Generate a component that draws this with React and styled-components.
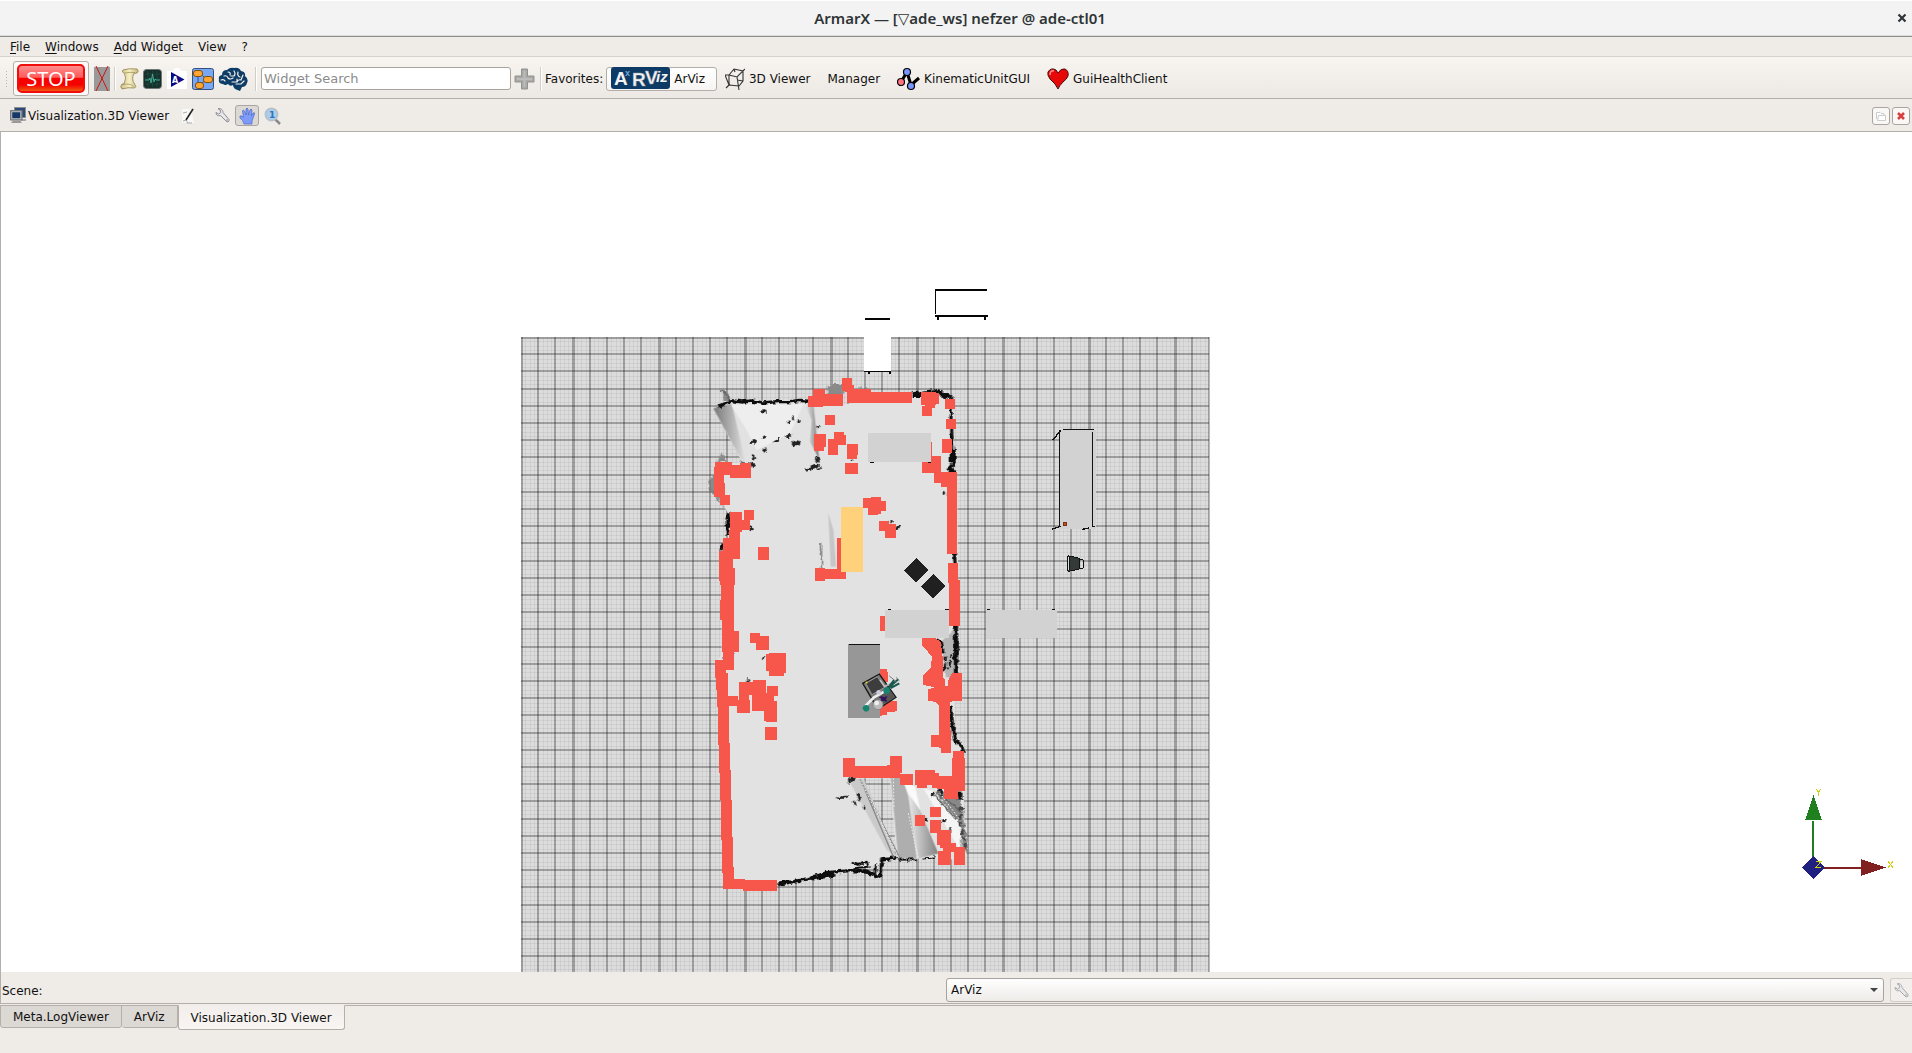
import React from "react";
import styled, { createGlobalStyle, css } from "styled-components";

const Global = createGlobalStyle`
  * { box-sizing: border-box; }
  body { margin: 0; background: #efebe7; color: #111; font: 12px/16px "DejaVu Sans", "Noto Sans", sans-serif; }
  button, input, select { font: inherit; color: inherit; margin: 0; }
  svg { display: block; flex: none; }
`;

const Window = styled.div`
  display: flex;
  flex-direction: column;
  height: 100vh;
  min-height: 480px;
  overflow: hidden;
`;

const TitleBar = styled.header`
  display: grid;
  grid-template-columns: 32px 1fr 24px;
  align-items: center;
  height: 37px;
  background: #f3f3f3;
  border-top: 1px solid #fff;
  border-bottom: 1px solid #8d8f8a;
  box-shadow: inset 0 -1px #dcdcda;
`;

const Title = styled.h1`
  grid-column: 2;
  margin: 0;
  padding-bottom: 2px;
  text-align: center;
  font: 600 15px/20px "Noto Sans", "DejaVu Sans", sans-serif;
  color: #2e3436;
`;

const PlainButton = styled.button`
  display: flex;
  align-items: center;
  justify-content: center;
  padding: 0;
  border: 0;
  background: none;
`;

const WindowClose = styled(PlainButton)`
  padding: 0 0 1px 4px;
`;

const MenuBar = styled.nav`
  display: flex;
  align-items: center;
  gap: 15px;
  height: 20px;
  padding: 0 10px;
  border-bottom: 1px solid #d5d1cb;
`;

const MenuItem = styled(PlainButton)`
  &::first-letter { text-decoration: ${(p) => (p.$plain ? "none" : "underline")}; text-underline-offset: 2px; }
  display: block;
`;

const ToolBar = styled.div`
  display: flex;
  align-items: center;
  height: 42px;
  padding: 2px 5px 0;
  background: linear-gradient(#f8f5f1, #ece8e3);
  border-bottom: 1px solid #b4afa9;
`;

const Handle = styled.div`
  width: 4px;
  height: 18px;
  margin-right: 4px;
  background: radial-gradient(circle, #bbb6b0 1px, transparent 1px) 0 0 / 3px 3px;
`;

const StopFrame = styled(PlainButton)`
  width: 76px;
  height: 35px;
  border: 1px solid #b3aea8;
  border-radius: 3px;
  background: #fbfaf9;
`;

const StopFace = styled.span`
  width: 68px;
  height: 29px;
  border: 2px solid #f20d0d;
  border-radius: 5px;
  background: linear-gradient(#ff8d8d, #ff5a5a 45%, #f60000 50%, #f60000 75%, #ee5a10);
  color: #fff;
  font: 20px/25px "Noto Sans", sans-serif;
`;

const Tools = styled.div`
  display: flex;
  align-items: center;
  gap: 4px;
  padding: 0 7px 0 5px;
`;

const Separator = styled.div`
  width: 2px;
  height: 24px;
  border-left: 1px solid #d2cdc7;
  border-right: 1px solid #fff;
`;

const Search = styled.input`
  width: 250px;
  height: 23px;
  margin: 0 3px 0 4px;
  padding: 0 2px;
  border: 1px solid #a8a39d;
  border-radius: 3px;
  background: #fff;
  outline: 0;
  font-size: 13px;
  &::placeholder { color: #8b8b8b; opacity: 1; }
`;

const Favorites = styled.div`
  display: flex;
  align-items: center;
  gap: 3px;
  margin-left: 5px;
`;

const FavoritesLabel = styled.span`
  white-space: nowrap;
`;

const Favorite = styled(PlainButton)`
  gap: 4px;
  height: 24px;
  padding: 0 8px 0 4px;
  border: 1px solid transparent;
  border-radius: 3px;
  white-space: nowrap;
  ${(p) => p.$raised && css`
    padding-right: 11px;
    border-color: #b3aea8;
    background: linear-gradient(#fff, #f7f5f3);
  `}
`;

const DockHeader = styled.div`
  display: flex;
  align-items: center;
  height: 33px;
  padding: 1px 2px 0 10px;
  border-bottom: 1px solid #b4afa9;
`;

const DockTitle = styled.h2`
  margin: 0 12px 0 2px;
  font: inherit;
`;

const DockTools = styled.div`
  display: flex;
  align-items: center;
  gap: 5px;
  margin-left: 20px;
`;

const ToggleButton = styled(PlainButton)`
  width: 24px;
  height: 21px;
  border: 1px solid #aaa5a0;
  border-radius: 3px;
  background: #dcd8d4;
`;

const DockActions = styled.div`
  display: flex;
  gap: 2px;
  margin-left: auto;
`;

const SmallButton = styled(PlainButton)`
  width: 18px;
  height: 18px;
  border: 1px solid #aaa5a0;
  border-radius: 3px;
  background: #f9f8f7;
`;

const Viewer = styled.main`
  position: relative;
  flex: 1;
  min-height: 0;
  background: #fff;
  border-left: 1px solid #b4afa9;
`;

const Scene = styled.svg`
  width: 100%;
  height: 100%;
`;

const AxisGizmo = styled.svg`
  position: absolute;
  right: 17px;
  bottom: 85px;
`;

const SceneBar = styled.div`
  display: flex;
  align-items: center;
  gap: 6px;
  height: 32px;
  padding: 0 0 1px 1px;
  border-left: 1px solid #b4afa9;
  border-bottom: 1px solid #b4afa9;
`;

const SceneLabel = styled.label`
  flex: 1;
  padding-top: 8px;
`;

const SelectBox = styled.div`
  position: relative;
  display: flex;
  flex: 1;
  align-self: flex-end;
  svg { position: absolute; right: 6px; top: 10px; pointer-events: none; }
`;

const SceneSelect = styled.select`
  flex: 1;
  appearance: none;
  height: 24px;
  padding: 0 4px;
  border: 1px solid #a8a39d;
  border-radius: 3px;
  background: linear-gradient(#fff, #eeebe8);
`;

const SceneSettings = styled(PlainButton)`
  width: 22px;
  height: 24px;
  align-self: flex-end;
  border: 1px solid #c5c0bb;
  border-right: 0;
  border-radius: 3px 0 0 3px;
  background: #f4f2ef;
  opacity: 0.7;
`;

const TabBar = styled.div`
  display: flex;
  align-items: flex-start;
  height: 48px;
  margin-top: 1px;
  box-shadow: inset 0 1px #b4afa9;
`;

const Tab = styled(PlainButton)`
  height: 23px;
  padding: 1px 12px 0;
  border: 1px solid #b4afa9;
  border-left-width: ${(p) => (p.$first ? "1px" : "0")};
  border-radius: 0 0 3px 3px;
  background: #dcd8d4;
  ${(p) => p.$active && css`
    height: 25px;
    border-top-color: #f1eeeb;
    border-left-width: 1px;
    background: linear-gradient(#f1eeeb, #f8f5f2);
  `}
`;

/* ---------- toolbar icons ---------- */

const Wrench = ({ size = 15 }) => (
  <svg width={size} height={size} viewBox="0 0 15 15">
    <path d="M1 4.500 3.600 6 5.600 4.600 5.200 2 3 .8C5.500 0 8 1.600 8 4.500L14 11.500Q14.600 14 12 14L5.600 7.600C3 8.500 .8 7 1 4.500Z" fill="#e6e6ea" stroke="#8d8d94" />
    <circle cx="12" cy="12" r=".8" fill="#888" />
  </svg>
);

const DisconnectIcon = () => (
  <svg width="16" height="25" viewBox="0 0 16 25">
    <path d="M0 1h16v24H0z" fill="#999" />
    <path d="M2 0 14 25M14 0 2 25" stroke="#d01212" fill="none" />
  </svg>
);

const ScrollIcon = () => (
  <svg width="19" height="22" viewBox="0 0 19 22">
    <defs><linearGradient id="paper"><stop stopColor="#cdbf83" /><stop offset=".5" stopColor="#f6efc6" /><stop offset="1" stopColor="#cbbb7c" /></linearGradient></defs>
    <path d="M3 2Q9 0 17 1Q19.500 3 17 5L14 5.500Q11 11 14.500 16Q17 19 14.500 20Q8 19 2 21Q-.5 19 2 16H4Q7 10 4.500 5.500Q1 4 3 2Z" fill="url(#paper)" stroke="#8d7f4a" strokeWidth=".8" />
    <path d="M4.500 5Q10 4 15 4.500M3 16.500Q12 15 13.500 19" fill="none" stroke="#9b8c52" strokeWidth=".7" />
  </svg>
);

const MonitorIcon = () => (
  <svg width="19" height="20" viewBox="0 0 19 20">
    <rect x=".5" y=".5" width="18" height="19" rx="3" fill="#16302c" stroke="#6e7775" />
    <path d="M2 5H17M2 10H17M2 15H17M5 2V18M9.500 2V18M14 2V18" stroke="#24504a" strokeWidth=".6" />
    <path d="M2 11H6L7 9 8 14 9.500 5 11 13 12 10 13 11H17" fill="none" stroke="#43b59b" strokeWidth=".9" />
  </svg>
);

const PlayIcon = () => (
  <svg width="22" height="22" viewBox="-1 0 22 22">
    <path d="M0 3H6Q7 0 10 0T14 3H20V21H0Z" fill="#fff" />
    <path d="M4 4 17.500 11.500 4 19Z" fill="#0b0b86" />
    <text x="5" y="15" fontSize="8" fontWeight="700" fill="#fff">A</text>
  </svg>
);

const FlowIcon = () => (
  <svg width="22" height="22" viewBox="0 0 22 22">
    <rect x=".5" y=".5" width="21" height="21" rx="2" fill="#78a8f5" stroke="#35507c" />
    <path d="M6 6V17M9 6 14 11M7 17 14 12" stroke="#35507c" fill="none" />
    <g fill="#ffa530" stroke="#82500b">
      <rect x="1.500" y="2.500" width="9" height="6" rx="2.500" />
      <rect x="11.500" y="8.500" width="9" height="6" rx="2.500" />
      <rect x="3.500" y="14.500" width="8" height="6" rx="2.500" />
    </g>
  </svg>
);

const BrainIcon = () => (
  <svg width="30" height="24" viewBox="0 0 30 24">
    <path d="M5 17Q0 17 1 12Q0 9 4 8Q4 3 9 3Q12 0 16 1Q21 0 23 4Q28 5 27 9Q31 12 29 16Q28 20 24 20L22 24 17 22Q15 20 15 18Q12 20 10 17Q7 19 5 17Z" fill="#0d3c66" />
    <path d="M3 13Q6 12 7 14M6 9Q9 8 10 11Q12 13 15 11M10 5Q13 5 12 8M13 9 16 9Q18 7 16 4M20 5Q19 9 22 10M25 8 23 13Q20 12 19 15L14 15M26 14 23 17 18 17M19 15V12" fill="none" stroke="#f3f1ed" strokeWidth="1.200" strokeLinecap="round" />
  </svg>
);

const PlusIcon = () => (
  <svg width="21" height="22" viewBox="0 0 21 22">
    <path d="M7.500 1H13.500V8H20V14H13.500V21H7.500V14H1V8H7.500Z" fill="#a9a9a7" stroke="#929290" />
    <path d="M10.500 3V19M3 11H18" stroke="#bcbcba" strokeWidth="2" />
  </svg>
);

const LogoSvg = styled.svg`
  overflow: visible;
`;

const ArVizLogo = () => (
  <LogoSvg width="59" height="23" viewBox="0 0 59 23">
    <rect width="59" height="22" rx="3" fill="#0d3b66" />
    <g fill="#f2f2f2" fontFamily="Liberation Sans, sans-serif" fontWeight="700">
      <text x="3" y="18" fontSize="19">A</text>
      <text x="14" y="9" fontSize="9" fill="#6fa5d6">x</text>
      <text x="21" y="19" fontSize="19" stroke="#999" strokeWidth=".4">R</text>
      <text x="34" y="17" fontSize="19" stroke="#999" strokeWidth=".4">V</text>
      <text x="45" y="15" fontSize="15" fontStyle="italic">iz</text>
    </g>
  </LogoSvg>
);

const CubeIcon = () => (
  <svg width="20" height="24" viewBox="0 0 20 24" fill="none" stroke="#333" strokeWidth="1.100">
    <path d="M0 8H4L9 2 18 4V14L14 19 4 18ZM4 8 12 10 20 2M12 10 14 23M4 8V18M9 2 10 5M1 21 5 17M12 13 18 14" />
  </svg>
);

const JointsIcon = () => (
  <svg width="23" height="24" viewBox="0 0 23 24">
    <path d="M4 15 10 5 14 18 22 11" fill="none" stroke="#000" strokeWidth="3" />
    <g stroke="#000" strokeWidth="1.200">
      <circle cx="4" cy="15" r="3.500" fill="#ff7382" /><circle cx="10" cy="5" r="3.500" fill="#7795ff" /><circle cx="14" cy="19" r="3.500" fill="#7795ff" />
    </g>
  </svg>
);

const HeartIcon = () => (
  <svg width="22" height="22" viewBox="0 0 22 22">
    <path d="M11 21Q9 16 3 11Q0 7 1 4Q4-1 9 2L11 5Q14 0 18 1Q22 3 21 8Q20 11 16 14Q12 18 11 21Z" fill="#e70808" stroke="#431010" />
    <path d="M3 7Q3 2 7 3" fill="none" stroke="#ff8c8c" strokeWidth="1.500" />
  </svg>
);

const ScreensIcon = () => (
  <svg width="16" height="17" viewBox="0 0 16 17">
    <rect x="4.500" y=".5" width="11" height="10" fill="#294a7a" stroke="#8f8f8f" />
    <path d="M11 12H16V14H11Z" fill="#aaa" />
    <rect x=".8" y="3.800" width="11" height="9" fill="#173765" stroke="#777" strokeWidth="1.500" />
    <rect x="1.800" y="4.800" width="9" height="7" fill="none" stroke="#e4e4e4" strokeWidth=".8" />
    <path d="M3 13.500H10L12 16H1Z" fill="#999" />
  </svg>
);

const NotePenIcon = () => (
  <svg width="14" height="16" viewBox="0 0 14 16">
    <path d="M1 1H10L13 15H1Z" fill="#f8f8f7" />
    <path d="M2 13Q7 11 6 15H11M2 5 6 4" stroke="#aaa" fill="none" />
    <path d="M12 1 5 12" stroke="#222" strokeWidth="1.600" />
  </svg>
);

const HandIcon = () => (
  <svg width="16" height="18" viewBox="0 0 16 18">
    <path d="M5 17Q4 13 1 11Q0 8 3 9L4.500 10.500 3.500 4Q4 2 5.500 4L7 8 7 2Q8 0 9 2L9.500 8 11 3Q12 1 13 3L12.300 9 14 6Q16 5 15.500 7L13 14V17Z" fill="#7f9bf9" stroke="#4d67c7" strokeWidth=".7" />
  </svg>
);

const ZoomIcon = () => (
  <svg width="17" height="18" viewBox="0 0 17 18">
    <path d="M11 12 16 17" stroke="#8a8a8a" strokeWidth="2.500" />
    <circle cx="7.500" cy="7.500" r="6.200" fill="#a9cdec" stroke="#b7bfc7" strokeWidth="1.500" />
    <text x="5" y="11" fontSize="9" fontWeight="700" fill="#3273b5">1</text>
  </svg>
);

/* ---------- 3D scene ---------- */

const CELL = 17.2;
const GRID = { x: 521, y: 337, w: 688, h: 636 };

const gridLines = (length, wideOffset) =>
  Array.from({ length: Math.floor(length / (CELL / 4)) + 1 }, (_, i) => {
    const major = i % 4 === 0;
    const wide = major && (i / 4) % 5 === wideOffset;
    return { at: Math.round((i * CELL) / 4) - (major && i > 0 ? 1 : 0), size: wide ? 3 : major ? 2 : 1, major };
  });

const FloorGrid = () => (
  <g shapeRendering="crispEdges">
    <rect x={GRID.x} y={GRID.y} width={GRID.w} height={GRID.h} fill="#dcdcdc" />
    {gridLines(GRID.w, 3).map((l) => (
      <rect key={"v" + l.at} x={GRID.x + l.at} y={GRID.y} width={l.size} height={GRID.h} fillOpacity={l.major ? 0.28 : 0.05} />
    ))}
    {gridLines(GRID.h, 9).map((l) => (
      <rect key={"h" + l.at} x={GRID.x} y={GRID.y + l.at} width={GRID.w} height={l.size} fillOpacity={l.major ? 0.28 : 0.05} />
    ))}
  </g>
);

const northScans = [
  [368,57,37,30],[355,78,45,33],[400,72,60,36],[456,24,30,40],[466,45,26,20],[472,65,70,35],[492,57,50,20],[540,66,126,32],
  [694,67,45,38],[700,70,47,32],[696,108,30,30],[706,95,28,20],[765,87,30,30],[768,147,30,30],[756,207,30,42],[405,135,30,30],
  [372,192,35,38],[372,210,30,34],[432,186,30,30],[440,195,28,30],[414,207,30,48],[471,222,32,32],[471,240,30,26],[465,279,39,32],
  [720,216,6,60],[696,276,30,32],[715,258,38,52],[732,305,68,34],[752,310,45,42],[771,330,30,222],[75,276,50,40],[120,285,62,38],
  [150,279,33,40],[72,290,30,92],[78,340,28,42],[90,375,29,30],[519,384,40,30],[543,381,30,50],[534,395,54,20],[534,400,30,35],
  [570,393,18,30],[567,453,31,30],[585,462,33,42],[162,420,30,30],[120,426,36,60],[150,450,30,30],[117,480,32,87],[99,504,36,60],
  [88,543,42,90],[90,594,45,50],[93,640,39,55],[90,690,42,60],[204,531,33,39],[441,503,14,100],[375,594,30,39],[400,597,68,31],
  [774,579,30,60],[777,630,32,120],[570,738,16,44],
];

const southScans = [
  [90,0,42,40],[95,30,38,110],[97,93,50,62],[100,140,33,70],[75,180,33,55],[78,220,36,50],[82,260,32,60],[84,315,34,120],
  [87,430,34,90],[90,510,34,90],[92,600,35,120],[96,710,33,110],[99,800,32,66],[105,836,60,32],[160,840,101,32],[112,288,32,30],
  [180,99,30,30],[198,108,39,42],[228,162,32,50],[237,159,50,60],[237,190,45,37],[148,246,40,40],[147,246,30,70],[141,300,39,38],
  [190,240,38,60],[186,280,45,52],[231,258,33,30],[222,285,30,78],[228,303,32,62],[225,381,36,38],[777,0,32,77],
  [459,474,35,57],[490,498,120,35],[600,468,35,50],[590,495,40,38],[630,522,39,32],[675,510,60,45],[680,515,30,48],[725,520,22,45],
  [740,528,80,38],[762,540,42,57],[790,453,33,70],[786,475,38,98],[720,622,33,30],[675,645,30,33],[720,660,33,40],[742,690,40,44],
  [750,700,32,45],[760,730,38,26],[744,752,40,44],[792,741,33,53],[570,207,22,30],[580,215,14,30],
];

const Blocks = ({ items }) => items.map(([x, y, w, h], i) => <rect key={i} x={x} y={y} width={w} height={h} />);

const specks = [
  [222,124,11,6],[190,216,11,5],[222,204,8,5],[226,240,7,4],[260,211,10,5],[296,156,7,4],[326,155,4,6],[318,220,13,8],[294,198,10,4],
  [190,262,4,7],[309,145,3,6],[385,170,3,5],[370,290,18,6],[356,298,10,5],[382,270,6,8],[388,296,8,4],[190,286,7,8],[486,270,4,4],
  [624,470,7,6],[606,455,6,4],[763,370,5,8],[183,475,5,6],[221,865,5,4],[173,932,5,4],
  [484,1230,15,6],[458,1282,18,4],[506,1280,5,12],[494,1300,4,9],[522,1313,4,4],[708,1349,5,6],[762,1352,6,5],[782,1378,4,7],[728,1272,6,7],[752,1265,6,11],
];

const MapPatches = () => (
  <>
    <path fill="#e2e2e2" d="M70 115 125 93 360 95 400 106 465 103 665 78 740 68 787 82 790 305 802 330 805 750 800 900 790 1110 815 1130 825 1250 820 1320 835 1440 820 1468 740 1468 620 1465 600 1225 520 1225 620 1465 560 1485 400 1510 260 1545 110 1545 80 880 95 850 95 540 115 500 115 430 75 370 75 285 157 277Z" />
    <g filter="url(#soft)">
      <path fill="url(#wedge)" d="M70 115 125 100 170 290 157 275Z" />
      <path fill="#f4f4f4" d="M122 104 340 102 300 190 200 240 170 180Z" opacity=".7" />
      <path fill="url(#beam)" d="M345 100 370 100 388 270 360 215 365 150Z" />
      <path fill="#aaa" d="M415 430 430 480 438 590 422 590Z" opacity=".5" />
      <path fill="#bbb" d="M475 1228 520 1225 625 1465 590 1440Z" opacity=".6" />
      <path fill="#aeaeae" d="M602 1220 635 1220 655 1280 680 1465 625 1465Z" />
      <path fill="#fafafa" d="M640 1235 675 1250 700 1360 680 1330Z" />
      <path fill="url(#beam)" d="M655 1270 690 1320 745 1450 685 1465Z" />
      <path fill="#f5f5f5" d="M700 1255 760 1270 830 1400 810 1440Z" />
    </g>
    <g filter="url(#rough)">
      <path fill="#888" d="M392 515 397 515 397 600 392 600Z" />
      <path fill="#777" d="M58 330 85 300 90 390 105 420 80 385 56 365Z" opacity=".8" />
      <path fill="#8a8a8a" d="M412 50 430 42 460 42 460 72 412 72ZM100 55 118 75 125 90 100 90ZM83 275 95 245 110 272ZM505 60 512 45 518 60ZM525 60 530 48 535 60Z" />
      <path fill="#888" d="M735 1265 805 1265 830 1400 838 1450 815 1440 810 1360Z" />
      <path fill="#b5b5b5" d="M755 810 800 770 795 925 765 925Z" />
      <g fill="none" stroke="#111" strokeLinejoin="round">
        <path strokeWidth="10" d="M85 110 125 92 155 96 185 93 218 99 260 95 300 95 330 91 358 94" />
        <path strokeWidth="16" d="M668 76 700 76M740 68 782 80" />
        <path strokeWidth="9" d="M665 72 730 62 785 80 783 145 786 200 790 280 780 300" />
        <path strokeWidth="18" d="M776 292 792 310M788 240 788 280" />
        <path strokeWidth="10" d="M115 430 114 495M100 525 92 540M793 545 795 580" />
        <path strokeWidth="13" d="M798 765 798 910" />
        <path strokeWidth="10" d="M738 808 755 820 758 850" />
        <path strokeWidth="6" d="M768 860 763 900 780 880 785 850" strokeDasharray="14 6" />
        <path strokeWidth="12" d="M782 1010 786 1060 795 1110 815 1130 818 1150" />
        <path strokeWidth="10" d="M262 1543 310 1535 370 1523 410 1508 480 1502 530 1503 557 1520 573 1515 575 1470 620 1463" />
        <path strokeWidth="16" d="M365 1524 435 1512" />
        <path strokeWidth="6" d="M625 1469 680 1468M695 1466 735 1462M485 1478 505 1485 530 1475 535 1490 490 1495M558 1480 555 1518" />
        <path strokeWidth="12" d="M812 1265 810 1292" />
        <path strokeWidth="9" stroke="#444" d="M815 1310 808 1350 820 1400 830 1445" strokeDasharray="14 9" />
        <path strokeWidth="5" stroke="#666" d="M730 1270 800 1350M745 1270 820 1330M100 865 130 853M95 60 120 90M150 277 190 285" />
      </g>
      {specks.map(([x, y, rx, ry], i) => <ellipse key={i} cx={x} cy={y} rx={rx} ry={ry} fill="#222" transform={`rotate(${-8 - (i % 5) * 7} ${x} ${y})`} />)}
    </g>
    <g fill="none" stroke="#888" strokeWidth="4">
      <path d="M510 1228 630 1465M525 1260 612 1465" />
      <path d="M512 1232 625 1460M545 1290 610 1440M655 1330 685 1465M610 1225 612 1310M750 1270 810 1350" stroke="#eee" strokeWidth="3" strokeDasharray="5 5" />
    </g>
  </>
);

const Robot = () => (
  <g transform="translate(850 660) scale(.33333)">
    <path d="M38 70 88 42 138 112 98 138 72 128Z" fill="#777" stroke="#181818" strokeWidth="4" />
    <path d="M47 70 82 50 104 82 66 104Z" fill="#3d3d3d" stroke="#999" strokeWidth="3" />
    <path d="M92 95 118 90 136 112 100 132Z" fill="#555" />
    <path d="M90 60 104 80 120 70" stroke="#c0c0c0" strokeWidth="5" fill="none" />
    <path d="M42 142 72 112 108 92" stroke="#eee" strokeWidth="8" fill="none" />
    <path d="M104 94 145 58M122 84 148 70M118 78 132 60" stroke="#17594f" strokeWidth="6" fill="none" />
    <path d="M118 48 140 66M138 52 148 62" stroke="#777" strokeWidth="3" />
    <path d="M94 108 102 112 112 108 108 118 112 126 100 122 90 126 94 116 86 112Z" fill="#32125c" />
    <circle cx="84" cy="134" r="15" fill="#bbb" stroke="#777" strokeWidth="2" />
    <circle cx="80" cy="129" r="7" fill="#f0f0f0" />
    <circle cx="86" cy="97" r="7" fill="#ccd" />
    <circle cx="110" cy="92" r="10" fill="#178370" />
    <circle cx="48" cy="145" r="10" fill="#178370" />
    <path d="M34 146 42 156" stroke="#999" strokeWidth="4" />
    <rect x="47" y="65" width="5" height="5" fill="#f1e600" />
  </g>
);

const SceneDrawing = () => (
  <Scene viewBox="1 132 1911 840" preserveAspectRatio="xMidYMid slice" role="img" aria-label="Top-down view of the mapped room">
    <defs>
      <filter id="soft" x="-5%" y="-5%" width="110%" height="110%"><feGaussianBlur stdDeviation="2" /></filter>
      <filter id="rough" x="-5%" y="-5%" width="110%" height="110%">
        <feTurbulence type="fractalNoise" baseFrequency=".07" numOctaves="2" seed="4" result="noise" />
        <feDisplacementMap in="SourceGraphic" in2="noise" scale="16" xChannelSelector="R" yChannelSelector="G" />
        <feGaussianBlur stdDeviation="2" />
      </filter>
      <linearGradient id="wedge"><stop stopColor="#777" /><stop offset="1" stopColor="#e5e5e5" /></linearGradient>
      <linearGradient id="beam"><stop stopColor="#e8e8e8" /><stop offset="1" stopColor="#808080" /></linearGradient>
    </defs>
    <FloorGrid />
    <g transform="translate(690 370) scale(.33333)">
      <MapPatches />
      <g fill="#f7564b" shapeRendering="crispEdges">
        <Blocks items={northScans} />
        <g transform="translate(0 690)">
          <rect x="474" y="132" width="96" height="222" fill="#979797" />
          <rect x="477" y="132" width="93" height="3" fill="#111" />
          <Blocks items={southScans} />
          <path d="M696 114 735 114 752 125 758 170 760 235 765 238 765 258 775 258 775 240 785 220 816 220 816 302 779 305 782 405 783 458 753 458 753 443 723 440 723 405 747 405 747 316 735 305 714 303 714 268 735 262 700 255 700 225 722 205 726 170 696 135Z" />
          <path d="M570 347 590 345 590 337 620 334 620 303 600 303 570 325Z" />
        </g>
        <rect x="534" y="189" width="189" height="87" fill="#d2d2d2" />
        <path d="M540 275h12v4h-12zM714 275h9v4h-9zM594 717h9v4h-9zM765 717h12v4h-12zM891 717h9v4h-9zM1086 717h9v4h-9z" fill="#111" />
        <rect x="585" y="720" width="192" height="84" fill="#d2d2d2" />
        <rect x="888" y="720" width="213" height="84" fill="#d2d2d2" />
        <rect x="453" y="411" width="66" height="195" fill="#ffd17a" />
        <path d="M679 564 716 601 679 638 642 601ZM730 612 767 649 730 686 693 649Z" fill="#202020" />
      </g>
    </g>
    <g transform="translate(840 270) scale(.33333)" shapeRendering="crispEdges">
      <rect x="72" y="186" width="81" height="117" fill="#fff" />
      <path d="M72 303h81v9h-6v-6h-57v6h-6v-6h-12zM75 144h75v6h-75zM285 57h156v6h-153v69h-3zM285 135h159v6h-6v9h-6v-9h-135v9h-6v-9h-6z" fill="#050505" />
      <rect x="660" y="480" width="108" height="297" fill="#d2d2d2" />
      <path d="M660 480V768M758 486V768" stroke="#111" strokeWidth="3" />
      <path d="M669 478H762M638 511 662 481M637 777 662 769M726 778 746 774M756 770 764 770" stroke="#111" strokeWidth="4" />
      <rect x="670" y="757" width="10" height="10" fill="#c1511a" stroke="#552211" strokeWidth="2" />
      <path d="M683 857 718 865 718 898 683 904Z" fill="#343a38" stroke="#111" strokeWidth="3" />
      <path d="M688 862V900M718 870H730V895H718" fill="none" stroke="#111" strokeWidth="3" />
      <path d="M686 862V900M724 872V893" stroke="#ddd" strokeWidth="3" />
    </g>
    <Robot />
  </Scene>
);

const Axes = () => (
  <AxisGizmo width="94" height="98" viewBox="0 0 94 98" shapeRendering="crispEdges">
    <path d="M12 32V70" stroke="#208020" strokeWidth="2" />
    <path d="M12.500 6 21 31H4Z" fill="#208020" />
    <path d="M20 79H64" stroke="#802020" strokeWidth="2" />
    <path d="M60 70 85 78.500 60 87Z" fill="#802020" />
    <path d="M12.500 67 24 78.500 12.500 90 1 78.500Z" fill="#202080" />
    <path d="M15 0 17.500 3 20 0M17.500 3V7M15 72.500H20L15 78.500H20M87 72 92 79M92 72 87 79" fill="none" stroke="#cfcf10" />
  </AxisGizmo>
);

export default function App() {
  return (
    <>
      <Global />
      <Window>
        <TitleBar>
          <Title>ArmarX — [▽ade_ws] nefzer @ ade-ctl01</Title>
          <WindowClose aria-label="Close window">
            <svg width="10" height="10" viewBox="0 0 10 10"><path d="M1.500 1.500 8.500 8.500M8.500 1.500 1.500 8.500" stroke="#2e3436" strokeWidth="2.200" /></svg>
          </WindowClose>
        </TitleBar>
        <MenuBar>
          <MenuItem>File</MenuItem>
          <MenuItem>Windows</MenuItem>
          <MenuItem>Add Widget</MenuItem>
          <MenuItem $plain>View</MenuItem>
          <MenuItem $plain>?</MenuItem>
        </MenuBar>
        <ToolBar>
          <Handle />
          <StopFrame><StopFace>STOP</StopFace></StopFrame>
          <Tools>
            <PlainButton aria-label="Disconnect"><DisconnectIcon /></PlainButton>
            <Separator />
            <PlainButton aria-label="Log"><ScrollIcon /></PlainButton>
            <PlainButton aria-label="System monitor"><MonitorIcon /></PlainButton>
            <PlainButton aria-label="Scenarios"><PlayIcon /></PlainButton>
            <PlainButton aria-label="Statecharts"><FlowIcon /></PlainButton>
            <PlainButton aria-label="Memory"><BrainIcon /></PlainButton>
          </Tools>
          <Separator />
          <Search placeholder="Widget Search" aria-label="Widget Search" />
          <PlainButton aria-label="Add widget"><PlusIcon /></PlainButton>
          <Favorites>
            <Separator />
            <FavoritesLabel>Favorites:</FavoritesLabel>
            <Favorite $raised><ArVizLogo />ArViz</Favorite>
            <Favorite><CubeIcon />3D Viewer</Favorite>
            <Favorite>Manager</Favorite>
            <Favorite><JointsIcon />KinematicUnitGUI</Favorite>
            <Favorite><HeartIcon />GuiHealthClient</Favorite>
          </Favorites>
        </ToolBar>
        <DockHeader>
          <ScreensIcon />
          <DockTitle>Visualization.3D Viewer</DockTitle>
          <PlainButton aria-label="Rename"><NotePenIcon /></PlainButton>
          <DockTools>
            <PlainButton aria-label="Configure"><Wrench /></PlainButton>
            <ToggleButton aria-label="Pan" aria-pressed="true"><HandIcon /></ToggleButton>
            <PlainButton aria-label="Zoom to fit"><ZoomIcon /></PlainButton>
          </DockTools>
          <DockActions>
            <SmallButton aria-label="Detach">
              <svg width="10" height="10" viewBox="0 0 10 10" fill="#fff" stroke="#ccc"><path d="M.5 8V1.500H4L5 2.500H8V5" /><path d="M2.500 4.500H9.500V9.500H1.500Z" /></svg>
            </SmallButton>
            <SmallButton aria-label="Close">
              <svg width="8" height="8" viewBox="0 0 8 8"><path d="M1 1 7 7M7 1 1 7" stroke="#d84040" strokeWidth="2.600" /></svg>
            </SmallButton>
          </DockActions>
        </DockHeader>
        <Viewer>
          <SceneDrawing />
          <Axes />
        </Viewer>
        <SceneBar>
          <SceneLabel htmlFor="scene">Scene:</SceneLabel>
          <SelectBox>
            <SceneSelect id="scene" defaultValue="ArViz"><option>ArViz</option></SceneSelect>
            <svg width="8" height="4" viewBox="0 0 8 4"><path d="M0 0H8L4 4Z" fill="#444" /></svg>
          </SelectBox>
          <SceneSettings aria-label="Scene settings"><Wrench /></SceneSettings>
        </SceneBar>
        <TabBar role="tablist">
          <Tab role="tab" $first>Meta.LogViewer</Tab>
          <Tab role="tab">ArViz</Tab>
          <Tab role="tab" $active aria-selected="true">Visualization.3D Viewer</Tab>
        </TabBar>
      </Window>
    </>
  );
}
